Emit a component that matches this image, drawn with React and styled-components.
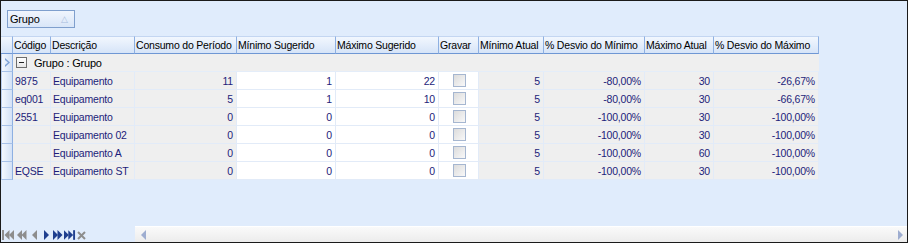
import React from 'react';
import styled, {createGlobalStyle} from 'styled-components';

const GlobalStyle = createGlobalStyle`
  html, body {
    margin: 0;
    padding: 0;
  }
  body {
    font-family: "Liberation Sans", Arial, sans-serif;
    font-size: 10.5px;
    letter-spacing: -0.2px;
  }
`;

const COLS = '12px 38px 84px 102px 99px 103px 40px 65px 101px 69px 105px';

const Frame = styled.div`
  box-sizing: border-box;
  width: 908px;
  height: 243px;
  border: 1px solid #1a1a1a;
  background: #e0ecfc;
  display: flex;
  flex-direction: column;
  overflow: hidden;
`;

const GroupPanel = styled.div`
  height: 35px;
  padding: 9px 0 0 6px;
  box-sizing: border-box;
`;

const GroupButton = styled.div`
  box-sizing: border-box;
  width: 68px;
  height: 18px;
  border: 1px solid #7f9fcd;
  background: linear-gradient(#f0f5fd, #d9e6f8);
  display: flex;
  align-items: center;
  justify-content: space-between;
  padding: 0 6px 0 2px;
  color: #000;
  font-size: 11px;
  span {
    color: #a9bddd;
    font-size: 9px;
  }
`;

const GridArea = styled.div`
  flex: 1;
`;

const Row = styled.div`
  display: grid;
  grid-template-columns: ${COLS};
  width: 818px;
  height: 18px;
`;

const HeaderCell = styled.div`
  box-sizing: border-box;
  height: 18px;
  background: linear-gradient(#f2f7fe, #d6e4f8);
  border-right: 1px solid #8eb0e2;
  border-bottom: 1px solid #6f97d4;
  border-top: 1px solid #c4d6f1;
  padding: 2px 0 0 1px;
  color: #000;
  white-space: nowrap;
  overflow: hidden;
`;

const Indicator = styled.div`
  box-sizing: border-box;
  height: 18px;
  background: linear-gradient(90deg, #f4f8fe, #d3e1f6);
  border-right: 1px solid #8eb0e2;
  border-bottom: 1px solid #a7c1e8;
  border-left: 1px solid #b9cdee;
  display: flex;
  align-items: center;
  justify-content: center;
`;

const GroupCell = styled.div`
  grid-column: 2 / -1;
  box-sizing: border-box;
  height: 18px;
  background: #efefef;
  border-bottom: 1px solid #e4edf9;
  display: flex;
  align-items: center;
  gap: 7px;
  padding-left: 3px;
  color: #000;
  font-size: 11px;
`;

const ExpandBox = styled.div`
  box-sizing: border-box;
  width: 11px;
  height: 11px;
  border: 1px solid #6d6d6d;
  background: linear-gradient(#ffffff, #e6e6e6);
  position: relative;
  &::after {
    content: '';
    position: absolute;
    left: 2px;
    top: 4px;
    width: 5px;
    height: 1px;
    background: #222;
  }
`;

const Cell = styled.div`
  box-sizing: border-box;
  height: 18px;
  background: ${p => (p.$edit ? '#ffffff' : '#efefef')};
  border-right: 1px solid #e2ebf8;
  border-bottom: 1px solid #e2ebf8;
  color: #1d1d7a;
  padding: 3px ${p => (p.$right ? '3px' : '0')} 0 ${p => (p.$right ? '0' : '2px')};
  text-align: ${p => (p.$right ? 'right' : 'left')};
  white-space: nowrap;
  overflow: hidden;
`;

const CheckCell = styled(Cell)`
  display: flex;
  justify-content: center;
  padding: 2px 0 0 1px;
`;

const CheckBox = styled.div`
  box-sizing: border-box;
  width: 13px;
  height: 13px;
  border: 1px solid #a5b6d0;
  background: linear-gradient(135deg, #dcdcdc, #f8f8f8);
`;

const Footer = styled.div`
  height: 16px;
  display: flex;
  align-items: stretch;
`;

const Navigator = styled.div`
  width: 134px;
  display: flex;
  align-items: center;
  padding: 2px 0 0 1px;
  box-sizing: border-box;
`;

const NavBtn = styled.div`
  width: ${p => p.$w}px;
  height: 12px;
  display: flex;
  align-items: center;
  justify-content: center;
`;

const Scrollbar = styled.div`
  flex: 1;
  background: linear-gradient(#fafafa, #ececec);
  border-top: 1px solid #ffffff;
  display: flex;
  align-items: center;
  justify-content: space-between;
  padding: 0 4px 0 6px;
`;

const columns = [
  'Código',
  'Descrição',
  'Consumo do Período',
  'Mínimo Sugerido',
  'Máximo Sugerido',
  'Gravar',
  'Mínimo Atual',
  '% Desvio do Mínimo',
  'Máximo Atual',
  '% Desvio do Máximo',
];

const rows = [
  ['9875', 'Equipamento', '11', '1', '22', '5', '-80,00%', '30', '-26,67%'],
  ['eq001', 'Equipamento', '5', '1', '10', '5', '-80,00%', '30', '-66,67%'],
  ['2551', 'Equipamento', '0', '0', '0', '5', '-100,00%', '30', '-100,00%'],
  ['', 'Equipamento 02', '0', '0', '0', '5', '-100,00%', '30', '-100,00%'],
  ['', 'Equipamento A', '0', '0', '0', '5', '-100,00%', '60', '-100,00%'],
  ['EQSE', 'Equipamento ST', '0', '0', '0', '5', '-100,00%', '30', '-100,00%'],
];

const Tri = ({dir, color}) => (
  <svg width="5" height="10" viewBox="0 0 5 10">
    {dir === 'left' ? (
      <path d="M5 0 L0 5 L5 10 Z" fill={color} />
    ) : (
      <path d="M0 0 L5 5 L0 10 Z" fill={color} />
    )}
  </svg>
);

const Arrows = ({dir, count, bar, color}) => {
  const w = count * 4.5 + (bar ? 2.5 : 0) + 1;
  return (
    <svg width={w} height="10" viewBox={`0 0 ${w} 10`}>
      {dir === 'left' && bar && <rect x="0" y="0" width="2" height="10" fill={color} />}
      {Array.from({length: count}).map((_, i) => {
        const x = (dir === 'left' && bar ? 2.5 : 0) + i * 4.5;
        return dir === 'left' ? (
          <path key={i} d={`M${x + 5} 0 L${x} 5 L${x + 5} 10 Z`} fill={color} />
        ) : (
          <path key={i} d={`M${x} 0 L${x + 5} 5 L${x} 10 Z`} fill={color} />
        );
      })}
      {dir === 'right' && bar && <rect x={count * 4.5 + 0.5} y="0" width="2" height="10" fill={color} />}
    </svg>
  );
};

const App = () => {
  return (
    <>
      <GlobalStyle />
      <Frame>
        <GroupPanel>
          <GroupButton>
            Grupo <span>△</span>
          </GroupButton>
        </GroupPanel>
        <GridArea>
          <Row>
            <HeaderCell />
            {columns.map(c => (
              <HeaderCell key={c}>{c}</HeaderCell>
            ))}
          </Row>
          <Row>
            <Indicator>
              <svg width="5" height="9" viewBox="0 0 5 9">
                <path d="M0 0 L5 4.5 L0 9 L0 7 L3 4.5 L0 2 Z" fill="#7fa2d6" />
              </svg>
            </Indicator>
            <GroupCell>
              <ExpandBox />
              Grupo : Grupo
            </GroupCell>
          </Row>
          {rows.map((r, i) => (
            <Row key={i}>
              <Indicator />
              <Cell>{r[0]}</Cell>
              <Cell>{r[1]}</Cell>
              <Cell $right>{r[2]}</Cell>
              <Cell $right $edit>{r[3]}</Cell>
              <Cell $right $edit>{r[4]}</Cell>
              <CheckCell $edit>
                <CheckBox />
              </CheckCell>
              <Cell $right>{r[5]}</Cell>
              <Cell $right>{r[6]}</Cell>
              <Cell $right>{r[7]}</Cell>
              <Cell $right>{r[8]}</Cell>
            </Row>
          ))}
        </GridArea>
        <Footer>
          <Navigator>
            <NavBtn $w={13}>
              <Arrows dir="left" count={2} bar color="#8d8d8d" />
            </NavBtn>
            <NavBtn $w={13}>
              <Arrows dir="left" count={2} color="#8d8d8d" />
            </NavBtn>
            <NavBtn $w={12}>
              <Tri dir="left" color="#8d8d8d" />
            </NavBtn>
            <NavBtn $w={12}>
              <Tri dir="right" color="#1f3f8f" />
            </NavBtn>
            <NavBtn $w={12}>
              <Arrows dir="right" count={2} color="#1f3f8f" />
            </NavBtn>
            <NavBtn $w={12}>
              <Arrows dir="right" count={2} bar color="#1f3f8f" />
            </NavBtn>
            <NavBtn $w={11}>
              <svg width="9" height="9" viewBox="0 0 9 9">
                <path d="M1 1 L8 8 M8 1 L1 8" stroke="#8d8d8d" strokeWidth="2" />
              </svg>
            </NavBtn>
          </Navigator>
          <Scrollbar>
            <Tri dir="left" color="#9eadd0" />
            <Tri dir="right" color="#9eadd0" />
          </Scrollbar>
        </Footer>
      </Frame>
    </>
  );
};

export default App;
